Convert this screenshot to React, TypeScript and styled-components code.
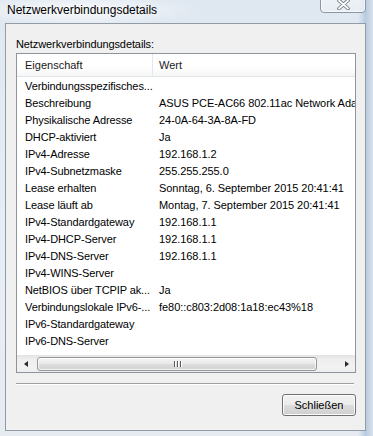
import styled, { createGlobalStyle } from 'styled-components';

const GlobalStyle = createGlobalStyle`
	html, body {
		margin: 0;
		padding: 0;
		background: #e2e9f1;
	}
	* {
		box-sizing: border-box;
	}
`;

const rows: [string, string][] = [
	['Verbindungsspezifisches...', ''],
	['Beschreibung', 'ASUS PCE-AC66 802.11ac Network Ada'],
	['Physikalische Adresse', '24-0A-64-3A-8A-FD'],
	['DHCP-aktiviert', 'Ja'],
	['IPv4-Adresse', '192.168.1.2'],
	['IPv4-Subnetzmaske', '255.255.255.0'],
	['Lease erhalten', 'Sonntag, 6. September 2015 20:41:41'],
	['Lease läuft ab', 'Montag, 7. September 2015 20:41:41'],
	['IPv4-Standardgateway', '192.168.1.1'],
	['IPv4-DHCP-Server', '192.168.1.1'],
	['IPv4-DNS-Server', '192.168.1.1'],
	['IPv4-WINS-Server', ''],
	['NetBIOS über TCPIP ak...', 'Ja'],
	['Verbindungslokale IPv6-...', 'fe80::c803:2d08:1a18:ec43%18'],
	['IPv6-Standardgateway', ''],
	['IPv6-DNS-Server', ''],
];

const WindowFrame = styled.div`
	width: 373px;
	height: 436px;
	overflow: hidden;
	display: flex;
	flex-direction: column;
	padding: 0 7px 5px 5px;
	font-family: 'Liberation Sans', Arial, sans-serif;
	background:
		radial-gradient(ellipse 120px 16px at 80px 10px, rgba(255, 255, 255, 0.85), rgba(255, 255, 255, 0)),
		linear-gradient(to right, rgba(0, 0, 0, 0) 96%, #b9cbe0 98%, #d6e1ee 100%),
		linear-gradient(to bottom, #dfe7f0, #e8eef5 60%, #e6ebf1);
`;

const TitleBar = styled.div`
	height: 23px;
	flex: none;
	display: flex;
	justify-content: space-between;
	align-items: flex-start;
	padding-left: 2px;
`;

const Title = styled.div`
	font-size: 12px;
	line-height: 15px;
	padding-top: 3px;
	color: #000;
`;

const CloseButton = styled.div`
	width: 46px;
	height: 21px;
	margin-top: -8px;
	border: 1px solid #8d97a4;
	border-radius: 0 0 4px 4px;
	background: linear-gradient(to bottom, rgba(255, 255, 255, 0.5), rgba(235, 240, 246, 0.8));
	box-shadow: inset 0 0 0 1px rgba(255, 255, 255, 0.6);
	display: flex;
	align-items: center;
	justify-content: center;
	padding-top: 3px;
`;

const Client = styled.div`
	flex: 1;
	display: flex;
	flex-direction: column;
	border: 1px solid #929ba6;
	background: #f0f0f0;
	padding: 13px 9px 0 10px;
`;

const GroupLabel = styled.div`
	font-size: 11px;
	line-height: 14px;
	color: #000;
	margin-bottom: 2px;
	letter-spacing: -0.1px;
`;

const ListView = styled.div`
	height: 320px;
	flex: none;
	display: flex;
	flex-direction: column;
	border: 1px solid #8e949c;
	background: #fff;
	overflow: hidden;
`;

const HeaderRow = styled.div`
	height: 23px;
	flex: none;
	display: flex;
	border-bottom: 1px solid #e5e5e5;
	background: linear-gradient(to bottom, #ffffff 0%, #ffffff 55%, #f5f6f7 100%);
`;

const HeaderCell = styled.div<{ $width?: number }>`
	${({ $width }) => ($width ? `width: ${$width}px;` : 'flex: 1;')}
	flex-shrink: 0;
	padding-left: ${({ $width }) => ($width ? 8 : 6)}px;
	font-size: 11px;
	line-height: 22px;
	color: #1a1a1a;
	border-right: ${({ $width }) => ($width ? '1px solid #e3e8ee' : 'none')};
`;

const RowList = styled.div`
	flex: 1;
	padding-top: 1px;
	overflow: hidden;
`;

const Row = styled.div`
	height: 17px;
	display: flex;
	font-size: 11px;
	line-height: 17px;
	color: #000;
	white-space: nowrap;
`;

const Cell = styled.div<{ $width?: number }>`
	${({ $width }) => ($width ? `width: ${$width}px;` : 'flex: 1;')}
	flex-shrink: 0;
	overflow: hidden;
	padding-left: ${({ $width }) => ($width ? 8 : 6)}px;
	letter-spacing: ${({ $width }) => ($width ? '-0.1px' : '-0.05px')};
`;

const ScrollBar = styled.div`
	height: 17px;
	flex: none;
	display: flex;
	background: linear-gradient(to bottom, #e3e3e3 0%, #eeeeee 25%, #f2f2f2 75%, #ececec 100%);
`;

const ArrowButton = styled.div`
	width: 17px;
	flex: none;
	display: flex;
	align-items: center;
	justify-content: center;
`;

const Arrow = styled.div<{ $dir: 'left' | 'right' }>`
	width: 0;
	height: 0;
	border-top: 3.5px solid transparent;
	border-bottom: 3.5px solid transparent;
	${({ $dir }) => ($dir === 'left' ? 'border-right: 4px solid #2b2b2b;' : 'border-left: 4px solid #2b2b2b;')}
`;

const Track = styled.div`
	flex: 1;
	display: flex;
	align-items: center;
	padding-left: 3px;
`;

const Thumb = styled.div`
	height: 14px;
	display: flex;
	align-items: center;
	justify-content: center;
	gap: 2px;
	border: 1px solid #989898;
	border-radius: 3px;
	background: linear-gradient(to bottom, #f6f6f6 0%, #e9e9e9 45%, #dcdcdc 55%, #d2d2d2 100%);
	box-shadow: inset 0 0 0 1px rgba(255, 255, 255, 0.7);
`;

const GripLine = styled.span`
	width: 1px;
	height: 6px;
	background: #5a5a5a;
	box-shadow: 1px 0 0 #fff;
`;

const Separator = styled.div`
	margin-top: 10px;
	margin-right: 2px;
	border-top: 1px solid #a0a0a0;
	border-bottom: 1px solid #ffffff;
`;

const ButtonRow = styled.div`
	display: flex;
	justify-content: flex-end;
	margin-top: 9px;
`;

const PushButton = styled.button`
	width: 74px;
	height: 22px;
	padding: 0;
	font-family: 'Liberation Sans', Arial, sans-serif;
	font-size: 11px;
	color: #000;
	border: 1px solid #707070;
	border-radius: 3px;
	background: linear-gradient(to bottom, #f2f2f2 0%, #ebebeb 50%, #dddddd 50%, #cfcfcf 100%);
	box-shadow: inset 0 0 0 1px #fcfcfc;
`;

const App = () => {
	const thumbWidth = 280;
	return (
		<>
			<GlobalStyle />
			<WindowFrame>
				<TitleBar>
					<Title>Netzwerkverbindungsdetails</Title>
					<CloseButton>
						<svg width='13' height='11' viewBox='0 0 13 11'>
							<path d='M2 1.5 L11 9.5 M11 1.5 L2 9.5' stroke='#6e7682' strokeWidth='3.6' strokeLinecap='round' />
							<path d='M2 1.5 L11 9.5 M11 1.5 L2 9.5' stroke='#ffffff' strokeWidth='1.8' strokeLinecap='round' />
						</svg>
					</CloseButton>
				</TitleBar>
				<Client>
					<GroupLabel>Netzwerkverbindungsdetails:</GroupLabel>
					<ListView>
						<HeaderRow>
							<HeaderCell $width={136}>Eigenschaft</HeaderCell>
							<HeaderCell>Wert</HeaderCell>
						</HeaderRow>
						<RowList>
							{rows.map(([name, value]) => (
								<Row key={name}>
									<Cell $width={136}>{name}</Cell>
									<Cell>{value}</Cell>
								</Row>
							))}
						</RowList>
						<ScrollBar>
							<ArrowButton>
								<Arrow $dir='left' />
							</ArrowButton>
							<Track>
								<Thumb style={{ width: thumbWidth }}>
									<GripLine />
									<GripLine />
									<GripLine />
								</Thumb>
							</Track>
							<ArrowButton>
								<Arrow $dir='right' />
							</ArrowButton>
						</ScrollBar>
					</ListView>
					<Separator />
					<ButtonRow>
						<PushButton>Schließen</PushButton>
					</ButtonRow>
				</Client>
			</WindowFrame>
		</>
	);
};

export default App;
